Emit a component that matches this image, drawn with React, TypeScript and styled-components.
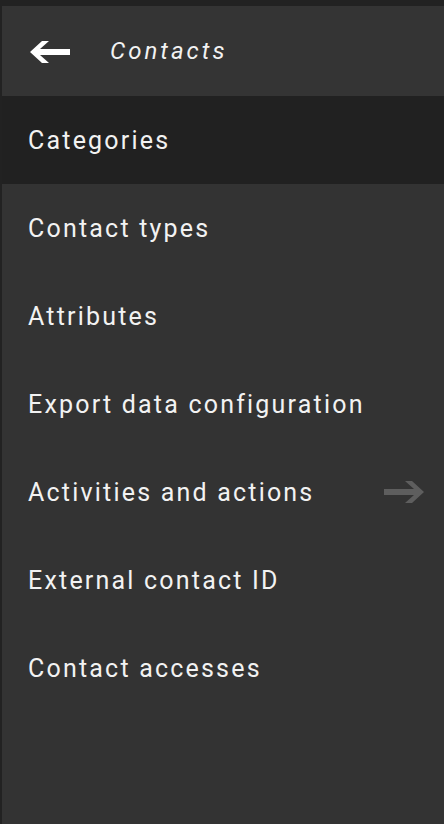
import React from 'react';
import styled, { createGlobalStyle } from 'styled-components';

const colors = {
  page: '#222222',
  panel: '#333333',
  active: '#212121',
  text: '#f2f2f2',
  muted: '#5e5e5e',
};

const GlobalStyle = createGlobalStyle`
  html, body {
    margin: 0;
    padding: 0;
    background: ${colors.page};
  }
  #root {
    min-height: 100vh;
  }
`;

const items = [
  { label: 'Categories', active: true },
  { label: 'Contact types' },
  { label: 'Attributes' },
  { label: 'Export data configuration' },
  { label: 'Activities and actions', hasChildren: true },
  { label: 'External contact ID' },
  { label: 'Contact accesses' },
];

const ArrowIcon = ({ direction, color }: { direction: 'left' | 'right'; color: string }) => (
  <svg
    width="40"
    height="22"
    viewBox="0 0 40 22"
    style={{ transform: direction === 'right' ? 'scaleX(-1)' : undefined }}
  >
    <polygon points="0,11 12,0 19,0 10,8 40,8 40,14 10,14 19,22 12,22" fill={color} />
  </svg>
);

export default function App() {
  return (
    <>
      <GlobalStyle />
      <Panel>
        <Header>
          <BackButton type="button" aria-label="Back">
            <ArrowIcon direction="left" color="#ffffff" />
          </BackButton>
          <Title>Contacts</Title>
        </Header>
        <Menu>
          {items.map((item) => (
            <MenuItem key={item.label} active={!!item.active}>
              <Label>{item.label}</Label>
              {item.hasChildren && <ArrowIcon direction="right" color={colors.muted} />}
            </MenuItem>
          ))}
        </Menu>
      </Panel>
    </>
  );
}

const Panel = styled.div`
  margin-top: 6px;
  min-height: 818px;
  border-left: 2px solid ${colors.page};
  background: ${colors.panel};
  display: flex;
  flex-direction: column;
  font-family: Roboto, 'Liberation Sans', sans-serif;
  color: ${colors.text};
`;

const Header = styled.div`
  height: 90px;
  display: flex;
  align-items: center;
  padding-left: 28px;
  background: #343434;
`;

const BackButton = styled.button`
  display: flex;
  align-items: center;
  padding: 0;
  border: none;
  background: none;
  cursor: pointer;
  margin-top: 1px;
`;

const Title = styled.div`
  margin-left: 40px;
  font-size: 24px;
  font-style: italic;
  letter-spacing: 3px;
  color: ${colors.text};
`;

const Menu = styled.ul`
  list-style: none;
  margin: 0;
  padding: 0;
`;

const MenuItem = styled.li<{ active: boolean }>`
  height: 88px;
  display: flex;
  align-items: center;
  justify-content: space-between;
  padding: 0 20px 0 26px;
  background: ${({ active }) => (active ? colors.active : 'transparent')};
  cursor: pointer;
`;

const Label = styled.span`
  font-size: 25px;
  letter-spacing: 2.2px;
  color: ${colors.text};
`;
